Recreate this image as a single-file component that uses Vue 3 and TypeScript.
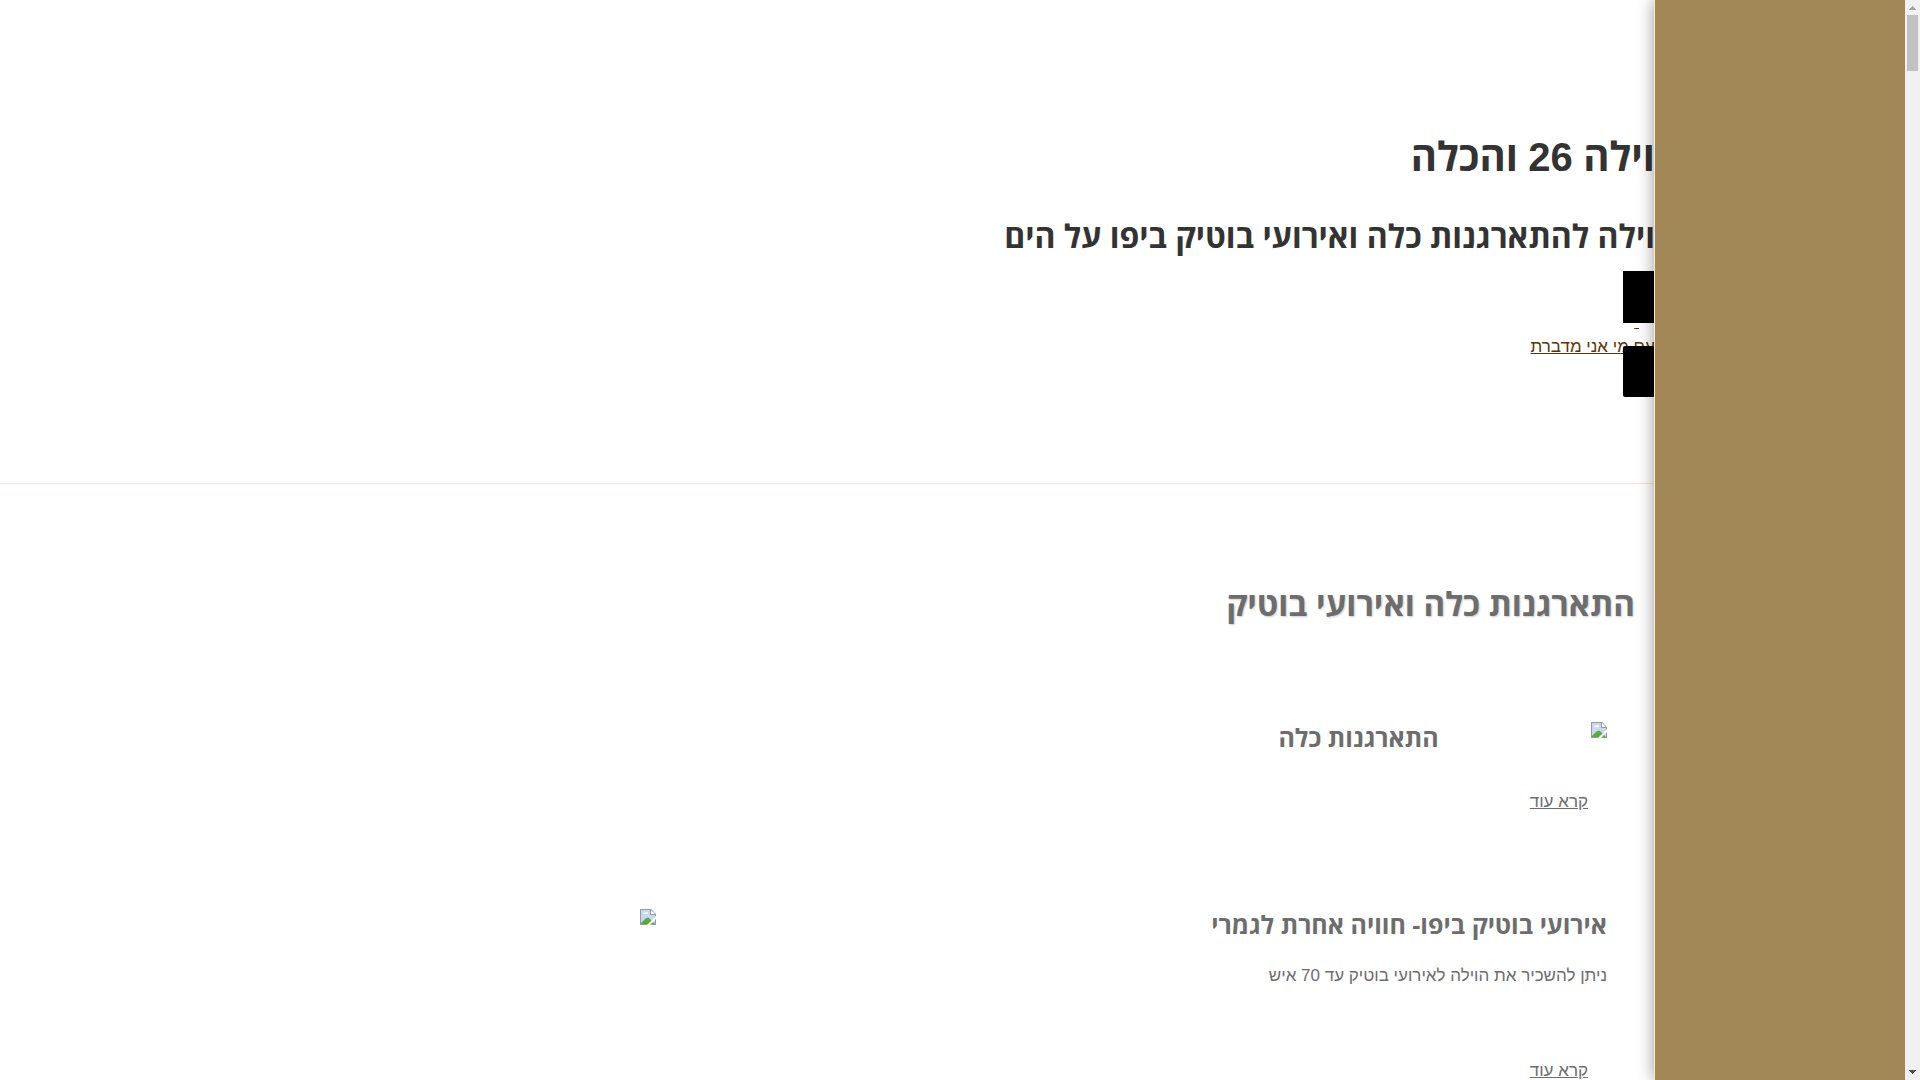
<script setup lang="ts">
interface Feature {
  id: string
  title: string
  text: string
  imageFirst: boolean
}

const features: Feature[] = [
  { id: 'bride', title: 'התארגנות כלה', text: '', imageFirst: true },
  {
    id: 'events',
    title: 'אירועי בוטיק ביפו- חוויה אחרת לגמרי',
    text: 'ניתן להשכיר את הוילה לאירועי בוטיק עד 70 איש',
    imageFirst: false,
  },
]
</script>

<template>
  <div class="page" dir="rtl" lang="he">
    <div class="scrollbar" aria-hidden="true">
      <svg class="arrow" width="15" height="15" viewBox="0 0 15 15" shape-rendering="crispEdges">
        <path d="M7 6h1v1h1v1h1v1h1v1H4V9h1V8h1V7h1z" fill="#a3a3a3" />
      </svg>
      <div class="thumb"></div>
      <svg class="arrow end" width="15" height="15" viewBox="0 0 15 15" shape-rendering="crispEdges">
        <path d="M4 5h7v1h-1v1H9v1H8v1H7V8H6V7H5V6H4z" fill="#505050" />
      </svg>
    </div>
    <aside class="sidebar"></aside>
    <main class="main">
      <header class="hero">
        <h1>וילה <span class="number">26</span> והכלה</h1>
        <h2>וילה להתארגנות כלה ואירועי בוטיק ביפו על הים</h2>
        <nav class="links">
          <a class="block" href="#next" aria-label="הבא"></a>
          <a class="spacer" href="#about">&nbsp;</a>
          <a class="about" href="#about">עם מי אני מדברת</a>
          <a class="block lower" href="#contact" aria-label="צור קשר"></a>
        </nav>
      </header>
      <section class="services">
        <h2>התארגנות כלה ואירועי בוטיק</h2>
        <article v-for="f in features" :key="f.id" class="feature">
          <div class="row" :class="{ first: f.imageFirst }">
            <div class="copy">
              <h3>{{ f.title }}</h3>
              <p v-if="f.text">{{ f.text }}</p>
            </div>
            <div class="media">
              <svg width="16" height="16" viewBox="0 0 16 16">
                <path d="M0 0h11l5 5v11H0z" fill="#999" />
                <path d="M1 1h9v5h5v9H1z" fill="#c5d8f8" />
                <path d="M11 1v4h4z" fill="#fff" />
                <path d="M3 5c0-1 1-2 2-1 1-2 3-1 3 1z" fill="#fff" />
                <path d="M1 15v-1l4-4c2-2 4-1 5 0l5 5z" fill="#5aac36" />
                <path d="M16 7v3l-6 6H7z" fill="#fff" />
              </svg>
            </div>
          </div>
          <a class="more" :href="'#' + f.id">קרא עוד</a>
        </article>
      </section>
    </main>
  </div>
</template>

<style>
body {
  overflow: hidden;
}
</style>

<style scoped>
.page {
  display: flex;
  height: 100vh;
  overflow: hidden;
  background: #fff;
  color: #6d6d6d;
  font: 17px/24px "Liberation Sans", Arial, sans-serif;
}
h1,
h2,
h3,
p {
  margin: 0;
}
h1,
h2,
h3 {
  font-family: "Open Sans", "Liberation Sans", sans-serif;
}
.number {
  font-family: "Liberation Sans", Arial, sans-serif;
}
.scrollbar {
  position: relative;
  z-index: 2;
  flex: 0 0 15px;
  display: flex;
  flex-direction: column;
  background: #f1f1f1;
}
.arrow {
  flex: none;
}
.arrow.end {
  margin-top: auto;
}
.thumb {
  height: 56px;
  margin: 0 2px;
  background: #c1c1c1;
}
.sidebar {
  position: relative;
  z-index: 1;
  box-sizing: border-box;
  flex: 0 0 251px;
  border-left: 1px solid #fbe6cf;
  background: #a28757;
  box-shadow: 0 0 16px rgba(0, 0, 0, 0.4);
}
.main {
  flex: 1;
  min-width: 0;
  margin-right: -1px;
}
.hero {
  box-sizing: border-box;
  min-height: 484px;
  padding-top: 131px;
  border-bottom: 1px solid #f5e6cf;
  color: #333;
}
.hero h1 {
  font-size: 40px;
  line-height: 50px;
}
.hero h2 {
  margin-top: 34px;
  font-size: 32px;
  line-height: 40px;
}
.links {
  display: flex;
  flex-direction: column;
  align-items: flex-start;
  margin-top: 15px;
}
.links a {
  color: #5c3407;
}
.block {
  width: 32px;
  height: 52px;
  background: #000;
}
.block.lower {
  position: relative;
  height: 51px;
  margin-top: -14px;
  border-radius: 2px;
}
.spacer {
  margin: -12px 16px 0 0;
  line-height: 22px;
}
.about {
  line-height: 27px;
}
.services {
  padding: 96px 48px 0;
}
.services h2 {
  margin-right: -28px;
  font-size: 33px;
  line-height: 48px;
  text-shadow: 1px 1px 2px rgba(0, 0, 0, 0.2);
}
.feature {
  margin-top: 94px;
}
.feature + .feature {
  margin-top: 95px;
}
.row {
  display: flex;
}
.copy {
  flex: 0 0 61%;
}
.first .media {
  order: -1;
  flex: 0 0 10.8%;
}
.row svg {
  display: block;
}
h3 {
  font-size: 25px;
  line-height: 30px;
}
.copy p {
  margin: 25px 0 58px;
}
.more {
  display: inline-block;
  margin: 13px 19px 0 0;
  color: inherit;
}
.first + .more {
  margin-top: 38px;
}
</style>
